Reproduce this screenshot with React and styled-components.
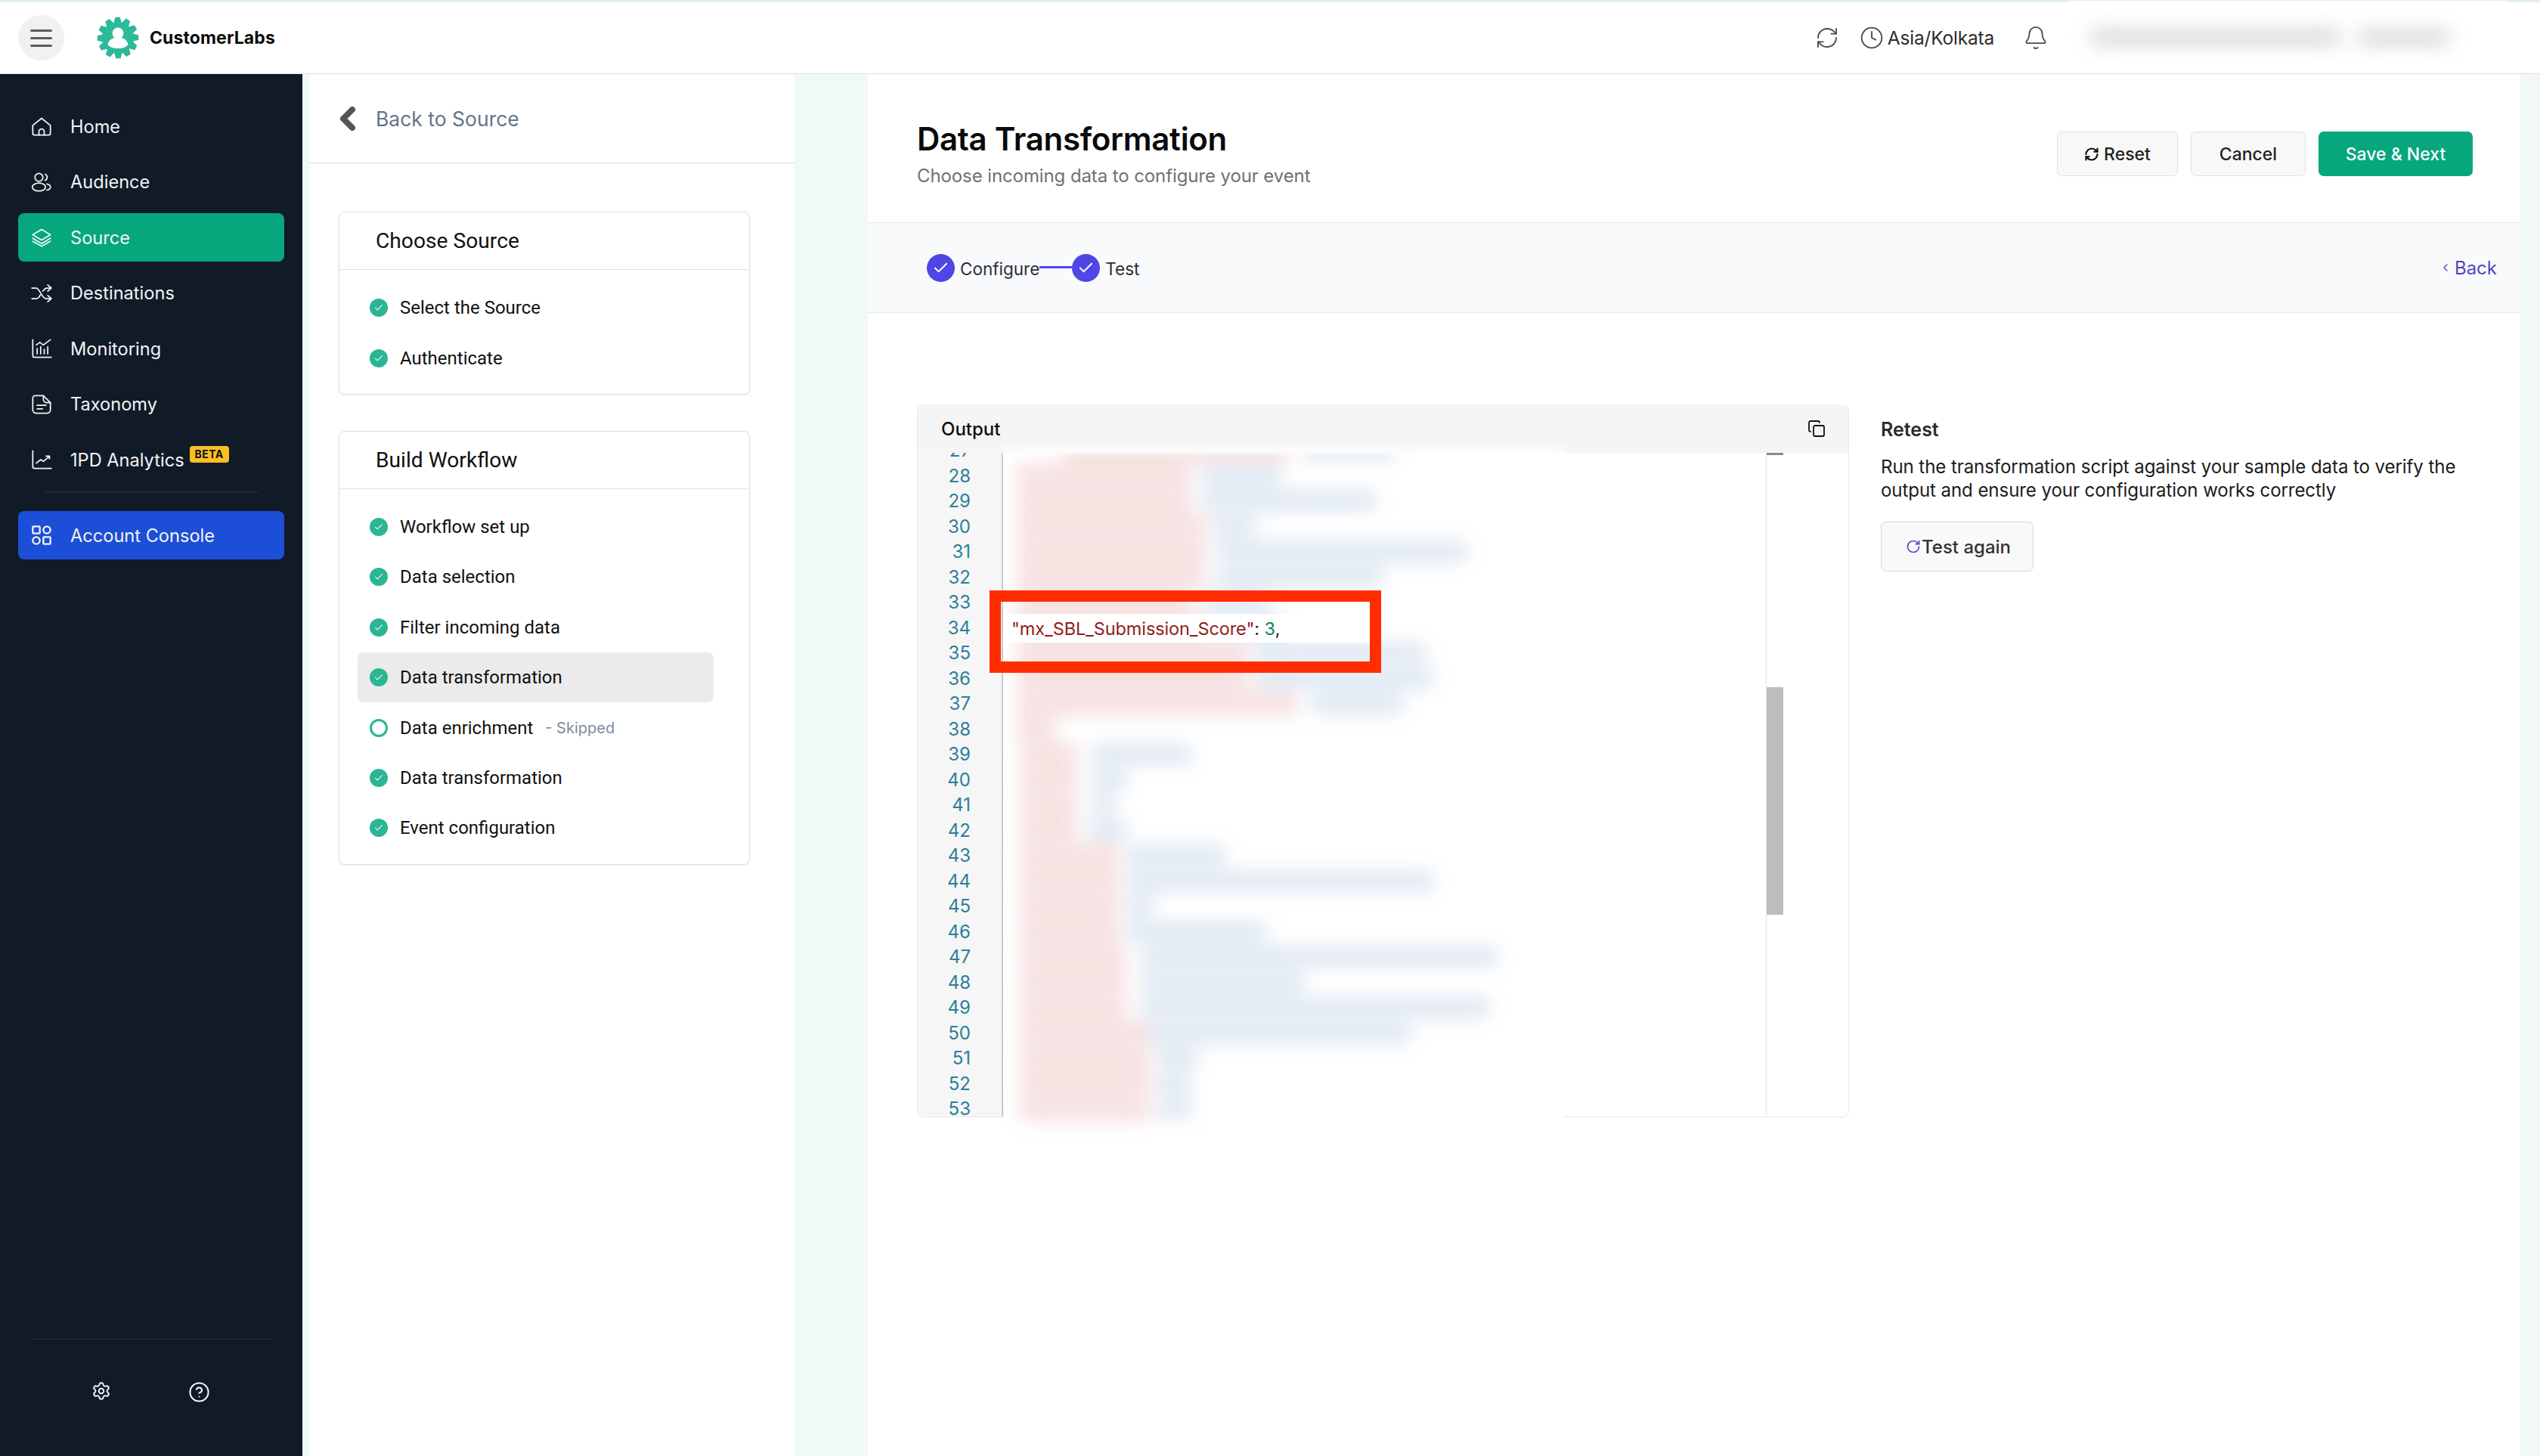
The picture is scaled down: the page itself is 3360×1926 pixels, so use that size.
import React from "react";
import styled, { createGlobalStyle } from "styled-components";
import { RefreshCw, Clock, Bell, Copy, ChevronLeft, Check, Settings, CircleHelp, RotateCw, ChevronLeft as Chev } from "lucide-react";

const Global = createGlobalStyle`
  html, body { margin: 0; padding: 0; background: #f1f9f6; }
  * { box-sizing: border-box; }
  body { font-family: Inter, "Open Sans", sans-serif; }
`;

const Page = styled.div`
  width: 3360px; height: 1926px; overflow: hidden; display: flex; flex-direction: column; background: #f1f9f6;
`;
const TopBar = styled.header`
  height: 98px; flex: none; background: #fff; border-top: 3px solid #e0efea; border-bottom: 1px solid #dedede;
  display: flex; align-items: center; padding: 0 0 0 24px; position: relative;
`;
const Burger = styled.button`
  width: 61px; height: 60px; border: 0; border-radius: 50%; background: #f1f1f1; display: flex; flex-direction: column;
  align-items: center; justify-content: center; gap: 7px; padding: 0; margin-right: 43px;
  span { display: block; width: 29px; height: 3px; border-radius: 2px; background: #5c5c5c; }
`;
const Brand = styled.div`
  display: flex; align-items: center; gap: 14px; font-weight: 700; font-size: 23px; color: #0b0b0b; letter-spacing: 0.1px;
`;
const TopRight = styled.div`
  margin-left: auto; display: flex; align-items: center; color: #4a4a4a; margin-right: 42px;
`;
const TopIcon = styled.span`
  display: flex; margin-right: ${p => p.$mr}px;
`;
const Zone = styled.span`
  font-size: 24.500px; color: #2d2d2d; margin-right: 38px; letter-spacing: -0.2px;
`;
const ProfileBlur = styled.div`
  width: 582px; height: 96px; margin-top: -3px; background: #fff; display: flex; align-items: center; padding-left: 30px; gap: 24px;
`;
const ProfileBar = styled.div`
  width: ${p => p.$w}px; height: 24px; background: #dcdcdc; filter: blur(12px); border-radius: 6px;
`;

const Body = styled.div`
  flex: 1; display: flex; min-height: 0;
`;
const Sidebar = styled.aside`
  width: 400px; flex: none; background: #111a27; padding: 37px 24px 0; display: flex; flex-direction: column;
`;
const NavList = styled.nav`
  display: flex; flex-direction: column; gap: 9.5px;
`;
const NavItem = styled.a`
  height: 64px; display: flex; align-items: center; gap: 24px; padding-left: 17px; border-radius: 8px;
  font-size: 23.600px; color: #f2f4f5; background: ${p => p.$bg || "transparent"};
  svg { width: 28px; height: 28px; flex: none; }
`;
const NavDivider = styled.div`
  height: 1px; background: #2a3340; margin: 10px 35px 25px;
`;
const Beta = styled.span`
  background: #fbbf24; color: #111; font-weight: 700; font-size: 14px; line-height: 22px; height: 22px; padding: 0 7px; border-radius: 4px;
  margin: -14px 0 0 -17px; letter-spacing: 0.4px;
`;
const SideFoot = styled.div`
  margin-top: auto; margin-left: 16px; margin-right: 16px; border-top: 1px solid #2a3340; height: 155px; display: flex; justify-content: center; align-items: flex-start;
  padding-top: 55px; padding-right: 1px; gap: 102px; color: #f2f4f5;
`;

const SidePanel = styled.section`
  width: 640px; margin-left: 10px; flex: none; background: #fff; display: flex; flex-direction: column;
`;
const BackHead = styled.div`
  height: 118px; flex: none; display: flex; align-items: center; padding: 0 0 0 26px; gap: 13px; border-bottom: 1px solid #cfdadb;
  font-size: 26.500px; color: #64748b;
`;
const Cards = styled.div`
  padding: 64px 58px 0 38px; display: flex; flex-direction: column; gap: 48px;
`;
const Card = styled.div`
  border: 1px solid #dfdfdf; border-radius: 8px; box-shadow: 0 1px 2px rgba(0,0,0,.08); background: #fff;
`;
const CardHead = styled.div`
  height: 76px; padding-left: 48px; display: flex; align-items: center; border-bottom: 1px solid #e2e2e2;
  font-family: Roboto, sans-serif; font-size: 28.200px; color: #111;
`;
const CardBody = styled.div`
  padding: 17px 47px 14px 24px;
`;
const Row = styled.div`
  height: 66.4px; display: flex; align-items: center; padding-left: 16px; gap: 16px; border-radius: 8px;
  background: ${p => p.$active ? "#ebebeb" : "transparent"};
  font-family: Roboto, sans-serif; font-size: 24px; color: #111;
`;
const Dot = styled.span`
  width: 24px; height: 24px; border-radius: 50%; flex: none; display: flex; align-items: center; justify-content: center;
  background: ${p => p.$hollow ? "#fff" : "#2bb594"}; border: ${p => p.$hollow ? "3px solid #2bb594" : "none"}; color: #fff;
`;
const Skipped = styled.span`
  font-family: Inter, sans-serif; font-size: 20px; color: #7d8ba0;
`;

const Main = styled.main`
  width: 2186px; margin-left: 98px; flex: none; background: #fff; display: flex; flex-direction: column;
`;
const MainHead = styled.div`
  height: 196px; flex: none; display: flex; justify-content: space-between; align-items: center; padding: 0 63px 0 65px;
`;
const TitleBlock = styled.div`
  display: flex; flex-direction: column; gap: 8px; padding-top: 16px;
`;
const Title = styled.h1`
  margin: 0; font-size: 42px; line-height: 50px; font-weight: 600; color: #0a0a0a; letter-spacing: -0.3px;
`;
const Sub = styled.p`
  margin: 0; font-size: 24px; line-height: 32px; color: #717171; letter-spacing: -0.1px;
`;
const Actions = styled.div`
  display: flex; gap: 17px; margin-top: 15px;
`;
const Btn = styled.button`
  height: 59px; width: ${p => p.$w}px; border-radius: 7px; font: 500 23px Inter, sans-serif;
  display: flex; align-items: center; justify-content: center; gap: 6px; padding: 0;
  background: ${p => p.$primary ? "#06a77d" : "#f8f8f8"}; color: ${p => p.$primary ? "#fff" : "#222"};
  border: ${p => p.$primary ? "0" : "1px solid #e0e0e0"};
`;
const Stepper = styled.div`
  height: 120px; flex: none; background: #f9fafb; border-top: 1px solid #e8e8e8; border-bottom: 1px solid #e8e8e8;
  display: flex; align-items: center; padding: 0 31px 0 78px;
`;
const StepDot = styled.span`
  width: 37px; height: 37px; border-radius: 50%; background: #4f46e5; color: #fff; display: flex; align-items: center; justify-content: center; flex: none;
`;
const StepLabel = styled.span`
  font-size: 22.500px; color: #2a2f3a; margin: 2px 7px 0;
`;
const StepLine = styled.span`
  width: 43px; height: 3px; background: #4f46e5; margin: 0 0 2px -7px;
`;
const BackLink = styled.a`
  margin-left: auto; font-size: 24px; color: #4f46c5; display: flex; align-items: center; gap: 4px;
`;
const Content = styled.div`
  display: flex; padding: 121px 0 0 65px; gap: 42px;
`;
const Output = styled.div`
  width: 1233px; height: 943px; flex: none; border: 1px solid #e8e8e8; border-top: 0; border-radius: 8px; position: relative; background: #fff; display: flex; flex-direction: column;
`;
const OutputHead = styled.div`
  height: 64px; flex: none; background: #f5f5f5; display: flex; justify-content: space-between; align-items: center;
  padding: 0 30px 0 31px; font-size: 24px; font-weight: 500; color: #111; border-radius: 8px 8px 0 0; position: relative; z-index: 2;
`;
const EditorBody = styled.div`
  flex: 1; display: flex; min-height: 0; position: relative;
`;
const Gutter = styled.div`
  width: 113px; flex: none; background: #f6f6f6; border-right: 2px solid #c9c9c9; overflow: hidden; border-radius: 0 0 0 8px;
`;
const GutterInner = styled.div`
  margin-top: -20px; display: flex; flex-direction: column;
`;
const LineNo = styled.div`
  height: 33.5px; line-height: 33.5px; text-align: right; padding-right: 41px; font-size: 24px; color: #2b7f9b;
`;
const CodeArea = styled.div`
  flex: 1; position: relative; z-index: 1;
`;
const BlurLayer = styled.div`
  filter: blur(12px); margin-top: -20px; display: flex; flex-direction: column; padding-left: 18px;
`;
const BlurLine = styled.div`
  height: 33.5px; display: flex; align-items: center;
`;
const BlurSeg = styled.div`
  height: ${p => p.$tall ? 30 : 25}px; width: ${p => p.$w}px; margin-left: ${p => p.$ml || 0}px; background: ${p => p.$c === "k" ? "#f6dfdf" : "#dce6f1"};
`;
const ScrollTrack = styled.div`
  width: 109px; flex: none; border-left: 1px solid #e6e6e6; position: relative; background: #fff; border-radius: 0 0 8px 0; z-index: 2;
`;
const ScrollMark = styled.div`
  position: absolute; left: 0; top: 0; width: 22px; height: 3px; background: #8a8a8a;
`;
const ScrollThumb = styled.div`
  position: absolute; left: 0; top: 310px; width: 22px; height: 301px; background: #bdbdbd;
`;
const HotLine = styled.div`
  position: absolute; left: 0; right: 0; top: 213px; height: 38px; background: #fff; padding-left: 11px;
  display: flex; align-items: center; font-size: 23.5px; color: #8f1c1c; white-space: nowrap; letter-spacing: -0.1px; z-index: 1;
  width: 485px;
  b { font-weight: 400; color: #098658; }
  i { font-style: normal; color: #222; }
`;
const RedBox = styled.div`
  position: absolute; left: 95px; top: 246px; width: 518px; height: 109px; border: 15px solid #ff2d00; z-index: 3;
`;
const EdgeMask = styled.div`
  position: absolute; left: 113px; bottom: -2px; width: 742px; height: 4px; background: #fff;
`;
const HeadFade = styled.div`
  position: absolute; left: 111px; top: 56px; width: 745px; height: 9px; background: #fff; filter: blur(4px); z-index: 2; opacity: .85;
`;
const Retest = styled.div`
  width: 790px; display: flex; flex-direction: column; align-items: flex-start; padding-top: 16px;
`;
const RetestTitle = styled.h2`
  margin: 0; font-size: 25px; line-height: 34px; font-weight: 600; color: #2b2b2b;
`;
const RetestText = styled.p`
  margin: 17px 0 0; font-size: 24.100px; line-height: 31px; color: #1c1c1c; letter-spacing: -0.1px; width: 790px;
`;
const TestBtn = styled.button`
  margin-top: 26px; width: 202px; height: 66px; background: #f9f9f9; border: 1px solid #d8d8d8; border-radius: 7px; display: flex; align-items: center;
  padding: 0 0 0 32px; gap: 1px; font: 500 24px Inter, sans-serif; color: #333;
  svg { color: #4f46c5; flex: none; }
`;

const gearPath = (() => {
  const cx = 28, cy = 28, n = 12, R = 27.5, r = 21;
  const pts = [];
  for (let i = 0; i < n; i++) {
    const a = (i / n) * Math.PI * 2 - Math.PI / 2;
    const step = (Math.PI * 2) / n;
    [[r, -0.5], [R, -0.25], [R, 0.2], [r, 0.42]].forEach(([rad, o]) => {
      const t = a + o * step;
      pts.push(`${(cx + rad * Math.cos(t)).toFixed(2)},${(cy + rad * Math.sin(t)).toFixed(2)}`);
    });
  }
  return pts.join(" ");
})();

const Logo = () => (
  <svg width="56" height="58" viewBox="0 0 56 56">
    <polygon points={gearPath} fill="#2dba98" />
    <circle cx="28" cy="22" r="7.5" fill="#fff" />
    <path d="M14.5 37c1-5.5 6-9 9-9h9c3 0 8 3.5 9 9-3 4-8 5-13.500 5s-10.500-1-13.500-5z" fill="#fff" />
  </svg>
);
const strokeProps = { fill: "none", stroke: "currentColor", strokeWidth: 1.5, strokeLinecap: "round", strokeLinejoin: "round", viewBox: "0 0 24 24" };
const HomeIcon = () => <svg {...strokeProps}><path d="M2 11l10-8 10 8v9a2 2 0 0 1-2 2H4a2 2 0 0 1-2-2z" /><path d="M9 22v-4a3 3 0 0 1 6 0v4" /></svg>;
const AudienceIcon = () => <svg {...strokeProps}><circle cx="9" cy="6.500" r="4.500" /><ellipse cx="9" cy="17.500" rx="7.500" ry="4.500" /><path d="M16 3a3.800 3.800 0 0 1 0 7M18 14c2.500.4 4 1.800 4 3.500s-1.500 3.100-4 3.500" /></svg>;
const LayersIcon = () => <svg {...strokeProps}><path d="M12 3L2 9l10 6 10-6z" /><path d="M2 13l10 6 10-6M2 16.500l10 5.500 10-5.500" /></svg>;
const ShuffleIcon = () => <svg {...strokeProps}><path d="M1 6h5c4 0 6 12 11 12h5M1 18h5c2 0 3.500-2 4.500-4M13.500 9.500C15 7.500 15.500 6 18 6h4" /><path d="M19 2.500L23 6l-4 3.500M19 14.500l4 3.500-4 3.500" /></svg>;
const MonitorIcon = () => <svg {...strokeProps}><path d="M2 2v18a2 2 0 0 0 2 2h19" /><path d="M7 18v-6M11 18v-8M15 18v-5M19 18v-8" /><path d="M6 8l4-3 4 3 8-6" /></svg>;
const TaxoIcon = () => <svg {...strokeProps}><path d="M5 2h9l8 8v8a4 4 0 0 1-4 4H6a4 4 0 0 1-4-4V5a3 3 0 0 1 3-3z" /><path d="M14 2v4a4 4 0 0 0 4 4h4M7 13h10M7 17h6" /></svg>;
const ChartIcon = () => <svg {...strokeProps}><path d="M2 2v18a2 2 0 0 0 2 2h19" /><path d="M6 16l5-4 3 2 7-6M17 8h4v3" /></svg>;
const GridIcon = () => <svg {...strokeProps} strokeWidth="2"><rect x="2" y="2" width="8" height="8" rx="1" /><circle cx="18" cy="6" r="4" /><circle cx="6" cy="18" r="4" /><rect x="14" y="14" width="8" height="8" rx="1" /></svg>;

const nav = [
  ["Home", HomeIcon], ["Audience", AudienceIcon], ["Source", LayersIcon, "#06a77d"], ["Destinations", ShuffleIcon],
  ["Monitoring", MonitorIcon], ["Taxonomy", TaxoIcon],
];
const flow = ["Workflow set up", "Data selection", "Filter incoming data", "Data transformation", "Data enrichment", "Data transformation", "Event configuration"];

// [line, key gap, key width, gap, value width] in px on the page
const lines = [
  [27, 60, 300, 20, 120], [28, 0, 230, 15, 105], [29, 0, 230, 15, 230], [30, 0, 250, 10, 55], [31, 0, 250, 15, 330],
  [32, 0, 250, 15, 220], [33, 0, 230, 15, 90], [34, 0, 250, 10, 100], [35, 0, 305, 10, 225], [36, 0, 305, 10, 235],
  [37, 0, 370, 20, 120], [38, 0, 50, 0, 0], [39, 5, 75, 20, 130], [40, 5, 75, 20, 45], [41, 5, 75, 20, 30],
  [42, 5, 75, 15, 50], [43, 5, 130, 10, 130], [44, 5, 130, 10, 405], [45, 5, 130, 10, 35], [46, 5, 130, 10, 185],
  [47, 5, 140, 20, 470], [48, 5, 140, 20, 215], [49, 5, 140, 20, 460], [50, 5, 170, 0, 345], [51, 5, 170, 10, 55],
  [52, 5, 170, 10, 45], [53, 5, 170, 10, 45],
];
const Tick = ({ size = 14 }) => <Check size={size} strokeWidth={1.8} />;

export default function App() {
  return (
    <Page>
      <Global />
      <TopBar>
        <Burger aria-label="Menu"><span /><span /><span /></Burger>
        <Brand><Logo />CustomerLabs</Brand>
        <TopRight>
          <TopIcon $mr={27}><RefreshCw size={32} strokeWidth={1.4} /></TopIcon>
          <TopIcon $mr={5}><Clock size={32} strokeWidth={1.4} /></TopIcon>
          <Zone>Asia/Kolkata</Zone>
          <TopIcon $mr={26}><Bell size={34} strokeWidth={1.3} /></TopIcon>
          <ProfileBlur aria-hidden="true"><ProfileBar $w={330} /><ProfileBar $w={120} /></ProfileBlur>
        </TopRight>
      </TopBar>
      <Body>
        <Sidebar>
          <NavList>
            {nav.map(([label, Icon, bg]) => (
              <NavItem key={label} $bg={bg}><Icon />{label}</NavItem>
            ))}
            <NavItem><ChartIcon />1PD Analytics<Beta>BETA</Beta></NavItem>
          </NavList>
          <NavDivider />
          <NavItem $bg="#1d4ed8"><GridIcon />Account Console</NavItem>
          <SideFoot>
            <Settings size={26} strokeWidth={1.8} />
            <CircleHelp size={29} strokeWidth={1.7} />
          </SideFoot>
        </Sidebar>
        <SidePanel>
          <BackHead><ChevronLeft size={48} strokeWidth={4} color="#555" />Back to Source</BackHead>
          <Cards>
            <Card>
              <CardHead>Choose Source</CardHead>
              <CardBody>
                <Row><Dot><Tick /></Dot>Select the Source</Row>
                <Row><Dot><Tick /></Dot>Authenticate</Row>
              </CardBody>
            </Card>
            <Card>
              <CardHead>Build Workflow</CardHead>
              <CardBody>
                {flow.map((label, i) => (
                  <Row key={i} $active={i === 3}>
                    <Dot $hollow={i === 4}>{i !== 4 && <Tick />}</Dot>{label}
                    {i === 4 && <Skipped>- Skipped</Skipped>}
                  </Row>
                ))}
              </CardBody>
            </Card>
          </Cards>
        </SidePanel>
        <Main>
          <MainHead>
            <TitleBlock>
              <Title>Data Transformation</Title>
              <Sub>Choose incoming data to configure your event</Sub>
            </TitleBlock>
            <Actions>
              <Btn $w={160}><RefreshCw size={20} strokeWidth={2.6} color="#111" />Reset</Btn>
              <Btn $w={152}>Cancel</Btn>
              <Btn $w={204} $primary>Save &amp; Next</Btn>
            </Actions>
          </MainHead>
          <Stepper>
            <StepDot><Check size={23} strokeWidth={2} /></StepDot>
            <StepLabel>Configure</StepLabel>
            <StepLine />
            <StepDot><Check size={23} strokeWidth={2} /></StepDot>
            <StepLabel>Test</StepLabel>
            <BackLink><Chev size={16} strokeWidth={2} />Back</BackLink>
          </Stepper>
          <Content>
            <Output>
              <OutputHead>Output<Copy size={24} strokeWidth={1.8} /></OutputHead>
              <HeadFade />
              <EditorBody>
                <Gutter>
                  <GutterInner>
                    {lines.map(([n]) => <LineNo key={n}>{n}</LineNo>)}
                  </GutterInner>
                </Gutter>
                <CodeArea>
                  <BlurLayer aria-hidden="true">
                    {lines.map(([n, a, k, g, v]) => (
                      <BlurLine key={n}>
                        <BlurSeg $c="k" $w={k} $ml={a} $tall />
                        {v > 0 && <BlurSeg $c="v" $w={v} $ml={g} />}
                      </BlurLine>
                    ))}
                  </BlurLayer>
                  <HotLine>"mx_SBL_Submission_Score"<i>:&nbsp;</i><b>3</b><i>,</i></HotLine>
                </CodeArea>
                <ScrollTrack>
                  <ScrollMark />
                  <ScrollThumb />
                </ScrollTrack>
              </EditorBody>
              <EdgeMask />
              <RedBox />
            </Output>
            <Retest>
              <RetestTitle>Retest</RetestTitle>
              <RetestText>Run the transformation script against your sample data to verify the output and ensure your configuration works correctly</RetestText>
              <TestBtn><RotateCw size={20} strokeWidth={2} />Test again</TestBtn>
            </Retest>
          </Content>
        </Main>
      </Body>
    </Page>
  );
}
